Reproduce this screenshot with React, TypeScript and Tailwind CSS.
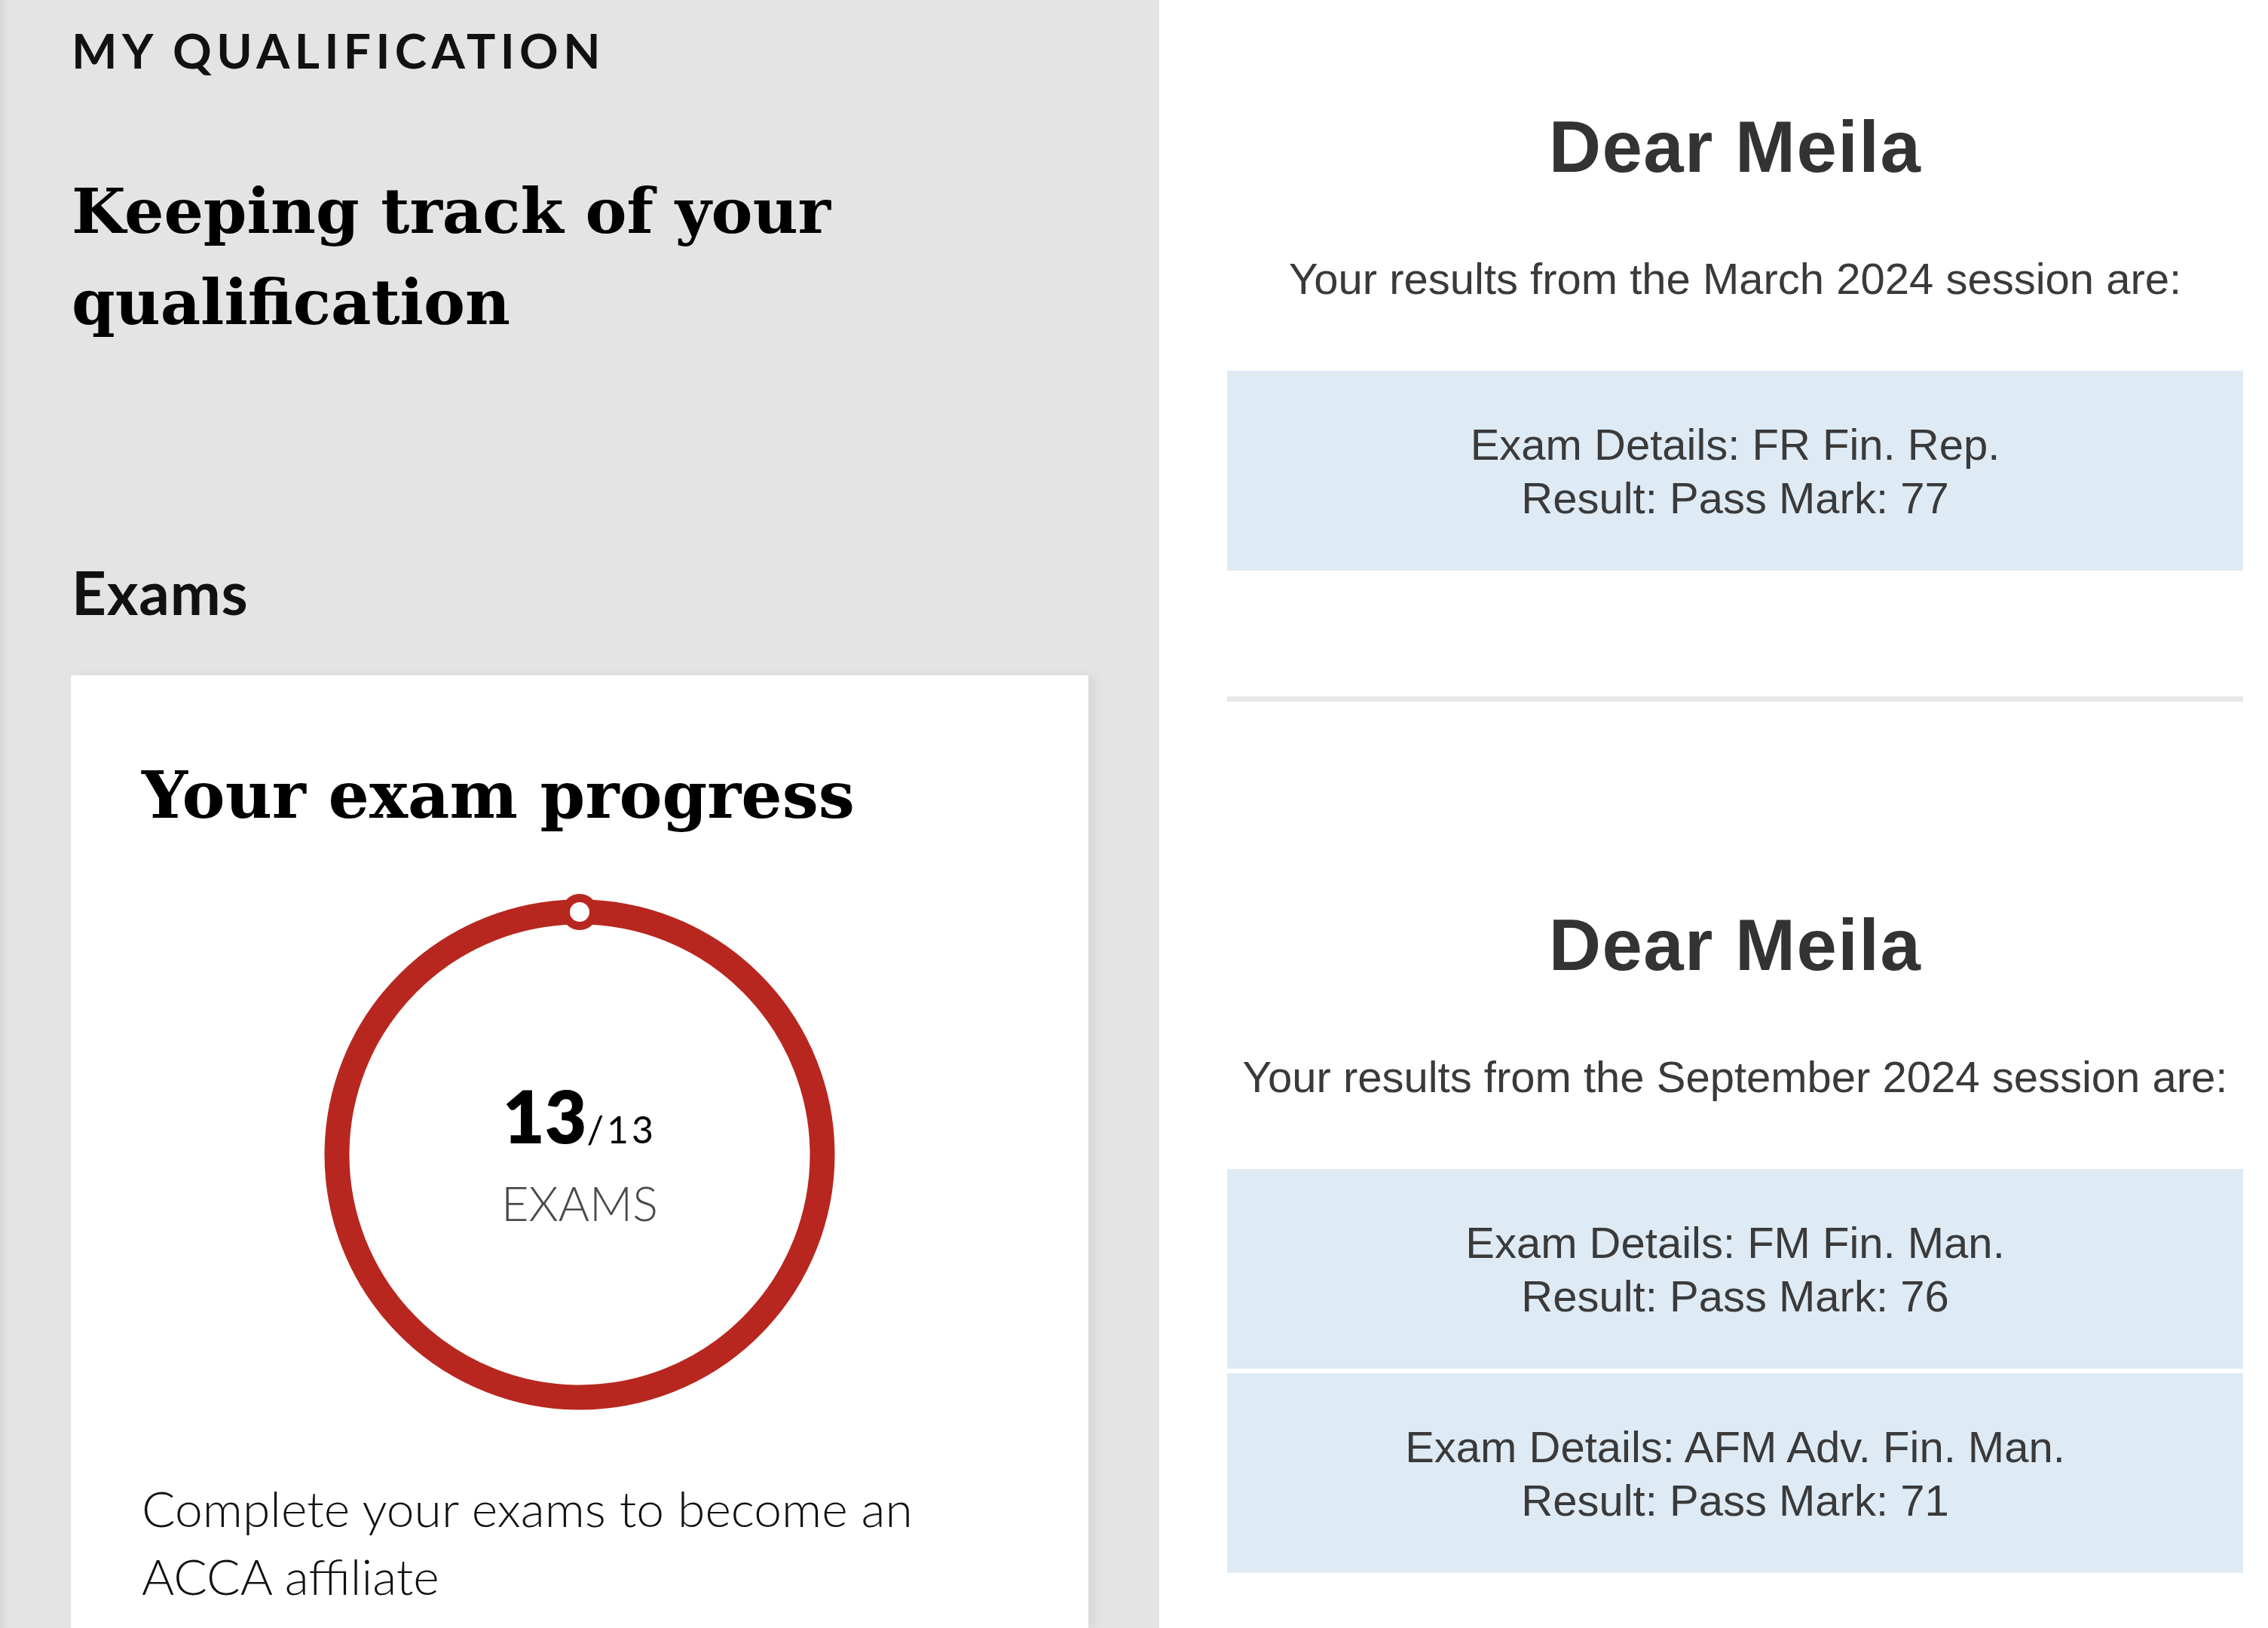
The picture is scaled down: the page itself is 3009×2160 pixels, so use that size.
import React from 'react';

type ExamResult = { details: string; mark: number };

type Session = { month: string; results: ExamResult[] };

const sessions: Session[] = [
    { month: 'March 2024', results: [{ details: 'FR Fin. Rep.', mark: 77 }] },
    {
        month: 'September 2024',
        results: [
            { details: 'FM Fin. Man.', mark: 76 },
            { details: 'AFM Adv. Fin. Man.', mark: 71 },
        ],
    },
];

const ProgressRing: React.FC<{ done: number; total: number }> = ({ done, total }) => {
    const r = 322;
    return (
        <div className="relative mx-auto mt-[85px] h-[700px] w-[700px]">
            <svg width="700" height="700" viewBox="0 0 700 700" className="block">
                <circle cx="350" cy="350" r={r} fill="none" stroke="#b8271f" strokeWidth="33" />
                <circle cx="350" cy={350 - r} r="24" fill="#b8271f" />
                <circle cx="350" cy={350 - r} r="13" fill="#ffffff" />
            </svg>
            <div className="absolute inset-0 flex flex-col items-center justify-center font-['Lato',sans-serif]">
                <div className="flex items-baseline leading-[96px] text-black">
                    <span className="text-[96px] font-extrabold">{done}</span>
                    <span className="text-[50px] font-normal tracking-[0.08em]">/{total}</span>
                </div>
                <div className="mt-[14px] text-[63px] font-light leading-[72px] text-[#4a4a4a]">EXAMS</div>
            </div>
        </div>
    );
};

const ResultBox: React.FC<{ result: ExamResult }> = ({ result }) => (
    <div className="flex h-[265px] flex-col items-center justify-center bg-[#deebf5] text-[58px] leading-[71px] text-[#3a3a3a]">
        <p>Exam Details: {result.details}</p>
        <p>Result: Pass Mark: {result.mark}</p>
    </div>
);

const SessionBlock: React.FC<{ session: Session; first: boolean }> = ({ session, first }) => (
    <div className={first ? 'mt-[150px]' : 'mt-[278px]'}>
        <h2 className="text-center text-[96px] font-bold leading-[90px] tracking-[0.015em] text-[#333333]">Dear Meila</h2>
        <p className="mt-[98px] text-center text-[58px] leading-[64px] text-[#3a3a3a]">
            Your results from the {session.month} session are:
        </p>
        <div className="mt-[90px] flex flex-col gap-[6px]">
            {session.results.map(result => (
                <ResultBox key={result.details} result={result} />
            ))}
        </div>
    </div>
);

export default function App() {
    return (
        <div className="flex h-[2160px] w-[3009px] overflow-hidden bg-white">
            {/* qualification panel */}
            <div className="flex w-[1538px] shrink-0 flex-col bg-[#e4e4e4] pl-[94px] shadow-[inset_12px_0_10px_-8px_rgba(0,0,0,0.07)]">
                <div className="mt-[35px] pl-[1px] font-['Lato',sans-serif] text-[64px] font-bold leading-[64px] tracking-[0.1em] text-[#111111]">
                    MY QUALIFICATION
                </div>
                <h1 className="mt-[121px] w-[1100px] pl-[1px] font-['DejaVu_Serif',serif] text-[82.5px] font-bold leading-[121px] text-black">
                    Keeping track of your qualification
                </h1>
                <h3 className="mt-[283px] pl-[1px] font-['Lato',sans-serif] text-[80px] font-bold leading-[80px] tracking-[0.01em] text-[#111111]">
                    Exams
                </h3>
                <div className="mt-[71px] flex-1 w-[1350px] bg-white px-[94px] pt-[117px] shadow-[8px_0_14px_rgba(0,0,0,0.06)]">
                    <h2 className="font-['DejaVu_Serif',serif] text-[85.5px] font-bold leading-[84px] text-black">
                        Your exam progress
                    </h2>
                    <ProgressRing done={13} total={13} />
                    <p className="mt-[74px] font-['Lato',sans-serif] text-[66px] font-light leading-[90px] text-[#111111]">
                        Complete your exams to become an ACCA affiliate
                    </p>
                </div>
            </div>

            {/* results emails */}
            <div className="flex-1 pl-[90px] pr-[33px] font-['Liberation_Sans',Arial,sans-serif]">
                {sessions.map((session, i) => (
                    <React.Fragment key={session.month}>
                        {i > 0 && <div className="mt-[167px] h-[7px] bg-[#e8e8e8]" />}
                        <SessionBlock session={session} first={i === 0} />
                    </React.Fragment>
                ))}
            </div>
        </div>
    );
}
